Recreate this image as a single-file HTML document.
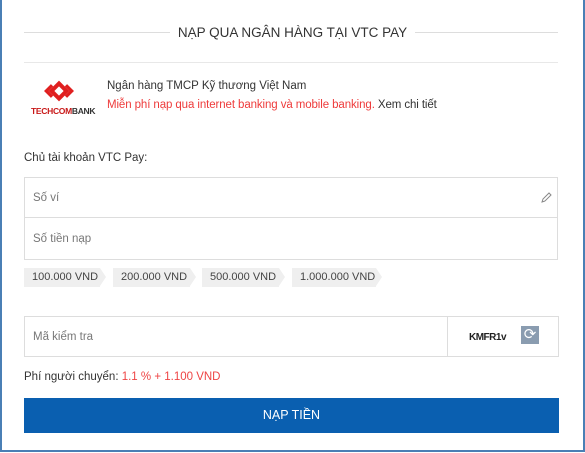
<html><head><style>
body{margin:0;width:585px;height:453px;background:#fff;font-family:"Liberation Sans",sans-serif;position:relative;overflow:hidden;font-size:11.5px;color:#333}
.a{position:absolute}
.frame{left:0;top:0;width:581px;height:450px;border:2px solid #4a7fb5;border-top:none}
.line{height:1px;background:#ddd}
.in{border:1px solid #ddd;background:#fff}
.ph{color:#777;font-size:11.5px}
.chip{top:268px;height:19px;line-height:19px;background:#efefef;color:#444;font-size:11px;padding-left:8px;box-sizing:border-box;white-space:nowrap}
.chip:after{content:"";position:absolute;right:-6px;top:0;border-left:6px solid #efefef;border-top:9.5px solid transparent;border-bottom:9.5px solid transparent}
</style></head><body>
<div class="a frame"></div>
<div class="a line" style="left:24px;top:32px;width:146px"></div>
<div class="a line" style="left:415px;top:32px;width:143px"></div>
<div class="a" style="left:170px;top:25px;width:245px;text-align:center;font-size:13.5px;color:#333">NẠP QUA NGÂN HÀNG TẠI VTC PAY</div>
<div class="a line" style="left:24px;top:62px;width:534px;background:#e8e8e8"></div>
<svg class="a" style="left:44px;top:80px" width="30" height="22" viewBox="0 0 26 18"><path d="M13 0 L22 9 L13 18 L4 9Z" fill="#e02020"/><path d="M13 5 L17 9 L13 13 L9 9Z" fill="#fff"/><path d="M0 9 L6 3 L8 5 L4 9 L8 13 L6 15Z M26 9 L20 3 L18 5 L22 9 L18 13 L20 15Z" fill="#e02020"/></svg>
<div class="a" style="left:31px;top:106px;font-size:8.5px;font-weight:bold;color:#c81818;letter-spacing:-0.3px">TECHCOM<span style="color:#333">BANK</span></div>
<div class="a" style="left:107px;top:80px;color:#333">Ngân hàng TMCP Kỹ thương Việt Nam</div>
<div class="a" style="left:107px;top:99px;color:#ee3b3b;letter-spacing:-0.1px">Miễn phí nạp qua internet banking và mobile banking. <span style="color:#333">Xem chi tiết</span></div>
<div class="a" style="left:24px;top:152px;color:#333">Chủ tài khoản VTC Pay:</div>
<div class="a in" style="left:24px;top:177px;width:532px;height:40px"></div>
<div class="a in" style="left:24px;top:217px;width:532px;height:41px"></div>
<div class="a ph" style="left:33px;top:192px">Số ví</div>
<div class="a ph" style="left:33px;top:233px">Số tiền nạp</div>
<svg class="a" style="left:540px;top:192px" width="12" height="12" viewBox="0 0 12 12"><path d="M2 10 L3 7 L9 1 L11 3 L5 9Z M2 10 L5 9" fill="none" stroke="#888" stroke-width="1"/></svg>
<div class="a chip" style="left:24px;width:76px">100.000 VND</div>
<div class="a chip" style="left:113px;width:77px">200.000 VND</div>
<div class="a chip" style="left:202px;width:77px">500.000 VND</div>
<div class="a chip" style="left:292px;width:84px">1.000.000 VND</div>
<div class="a in" style="left:24px;top:316px;width:474px;height:39px"></div>
<div class="a in" style="left:447px;top:316px;width:110px;height:39px;border-left:1px solid #ddd"></div>
<div class="a ph" style="left:33px;top:331px">Mã kiểm tra</div>
<div class="a" style="left:469px;top:332px;font-size:10px;font-weight:bold;color:#222;letter-spacing:-0.5px">KMFR1v</div>
<div class="a" style="left:521px;top:326px;width:18px;height:18px;background:#8a9cb0;color:#fff;font-size:15px;line-height:18px;text-align:center">⟳</div>
<div class="a" style="left:24px;top:371px;color:#333">Phí người chuyển: <span style="color:#ee4444">1.1 % + 1.100 VND</span></div>
<div class="a" style="left:24px;top:398px;width:535px;height:35px;background:#0a5fb0;color:#fff;text-align:center;line-height:35px;font-size:12.5px">NẠP TIỀN</div>
</body></html>
